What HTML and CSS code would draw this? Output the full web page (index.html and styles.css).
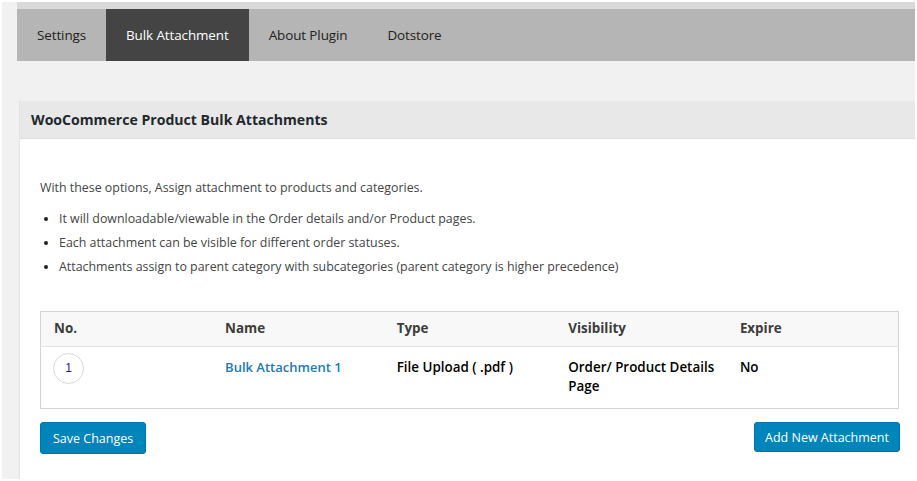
FILE: index.html
```html
<!DOCTYPE html>
<html>
<head>
<meta charset="utf-8">
<link rel="stylesheet" href="styles.css">
</head>
<body>
<div class="wrap">
  <nav class="tabs">
    <a class="tab">Settings</a>
    <a class="tab active">Bulk Attachment</a>
    <a class="tab">About Plugin</a>
    <a class="tab">Dotstore</a>
  </nav>
  <section class="panel">
    <h2 class="panel-title">WooCommerce Product Bulk Attachments</h2>
    <div class="panel-body">
      <p class="intro">With these options, Assign attachment to products and categories.</p>
      <ul class="notes">
        <li>It will downloadable/viewable in the Order details and/or Product pages.</li>
        <li>Each attachment can be visible for different order statuses.</li>
        <li>Attachments assign to parent category with subcategories (parent category is higher precedence)</li>
      </ul>
      <table class="grid">
        <thead>
          <tr><th>No.</th><th>Name</th><th>Type</th><th>Visibility</th><th>Expire</th></tr>
        </thead>
        <tbody>
          <tr>
            <td><span class="num">1</span></td>
            <td><a class="name">Bulk Attachment 1</a></td>
            <td class="strong">File Upload ( .pdf )</td>
            <td class="strong"><span class="vis">Order/ Product Details Page</span></td>
            <td class="strong">No</td>
          </tr>
        </tbody>
      </table>
      <div class="actions">
        <button class="btn">Save Changes</button>
        <button class="btn">Add New Attachment</button>
      </div>
    </div>
  </section>
</div>
</body>
</html>
```
FILE: styles.css
```css
html, body {
  margin: 0;
  padding: 0;
  background: #fff;
}
body {
  font-family: "Open Sans", "Noto Sans", sans-serif;
  color: #444;
}
.wrap {
  margin: 2px 2px 2px 2px;
  width: 913px;
  height: 477px;
  background: #f1f1f1;
  padding-left: 15px;
  box-sizing: border-box;
  display: flex;
  flex-direction: column;
}
.tabs {
  display: flex;
  background: #b5b5b5;
  border-top: 7px solid #d9d9d9;
  height: 52px;
  flex: none;
}
.tab {
  display: block;
  padding: 0 20px;
  line-height: 52px;
  font-size: 13.45px;
  letter-spacing: -0.1px;
  color: #222;
}
.tab.active {
  background: #444;
  color: #fff;
}
.panel {
  margin: 40px 0 0 2px;
  flex: 1;
  background: #fff;
  border-left: 1px solid #e2e2e2;
  display: flex;
  flex-direction: column;
}
.panel-title {
  margin: 0;
  height: 37px;
  line-height: 38px;
  background: #e8e8e8;
  border-bottom: 1px solid #dcdcdc;
  padding-left: 11px;
  font-size: 14.1px;
  font-weight: 700;
  color: #23282d;
}
.panel-body {
  padding: 40px 16px 0 20px;
}
.intro {
  margin: 0;
  font-size: 12.4px;
  line-height: 18px;
  color: #444;
}
.notes {
  margin: 13px 0 0;
  padding-left: 19px;
  font-size: 12.4px;
  line-height: 18px;
  color: #444;
}
.notes li {
  margin-bottom: 6px;
}
.notes li::marker {
  color: #222;
}
.grid {
  margin-top: 35px;
  width: 859px;
  border-collapse: collapse;
  border: 1px solid #d2d2d2;
  table-layout: fixed;
  font-size: 13.4px;
}
.grid th {
  text-align: left;
  background: #f8f8f8;
  font-weight: 700;
  color: #3c3c3c;
  height: 35px;
  box-sizing: border-box;
  padding: 0 13px 3px;
  border-bottom: 1px solid #e2e2e2;
}
.grid td {
  vertical-align: top;
  padding: 6px 13px 0;
  height: 62px;
  box-sizing: border-box;
  line-height: 19px;
  color: #000;
}
.num {
  display: block;
  width: 29px;
  height: 29px;
  margin-left: -1px;
  border: 1px solid #d9d9d9;
  border-radius: 50%;
  text-align: center;
  line-height: 29px;
  font-family: "Liberation Sans", Arial, sans-serif;
  font-size: 12px;
  color: #2c1a8a;
}
.grid td:not(:first-child) {
  padding-top: 11px;
}
.name {
  color: #2278b4;
  font-weight: 600;
  font-size: 13px;
}
.strong {
  font-weight: 600;
}
.vis {
  display: block;
  width: 150px;
}
.actions {
  margin-top: 13px;
  width: 860px;
  display: flex;
  justify-content: space-between;
  align-items: flex-start;
}
.btn {
  font-family: "Open Sans", "Noto Sans", sans-serif;
  font-size: 12.5px;
  color: #fff;
  background: #0085ba;
  border: 1px solid #0073aa;
  border-radius: 3px;
  height: 32px;
  padding: 0 12px;
}
.btn + .btn {
  height: 30px;
  padding: 0 10px;
}
```
